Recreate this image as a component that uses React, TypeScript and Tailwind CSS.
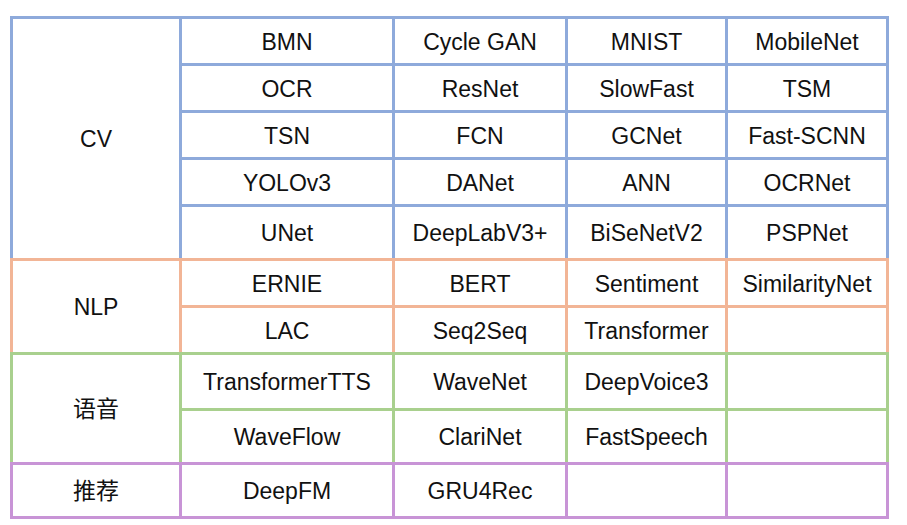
import React from 'react';

type Group = {
  name: string;
  border: string;
  rows: string[][];
  heights: string;
  span: string;
};

const groups: Group[] = [
  {
    name: 'CV',
    border: 'bg-[#8eaadb]',
    heights: 'grid-rows-[44px_44px_44px_44px_51px]',
    span: 'row-span-5',
    rows: [
      ['BMN', 'Cycle GAN', 'MNIST', 'MobileNet'],
      ['OCR', 'ResNet', 'SlowFast', 'TSM'],
      ['TSN', 'FCN', 'GCNet', 'Fast-SCNN'],
      ['YOLOv3', 'DANet', 'ANN', 'OCRNet'],
      ['UNet', 'DeepLabV3+', 'BiSeNetV2', 'PSPNet'],
    ],
  },
  {
    name: 'NLP',
    border: 'bg-[#f2b596]',
    heights: 'grid-rows-[44px_44px]',
    span: 'row-span-2',
    rows: [
      ['ERNIE', 'BERT', 'Sentiment', 'SimilarityNet'],
      ['LAC', 'Seq2Seq', 'Transformer', ''],
    ],
  },
  {
    name: '语音',
    border: 'bg-[#a9d08e]',
    heights: 'grid-rows-[53px_51px]',
    span: 'row-span-2',
    rows: [
      ['TransformerTTS', 'WaveNet', 'DeepVoice3', ''],
      ['WaveFlow', 'ClariNet', 'FastSpeech', ''],
    ],
  },
  {
    name: '推荐',
    border: 'bg-[#c894d6]',
    heights: 'grid-rows-[51px]',
    span: 'row-span-1',
    rows: [['DeepFM', 'GRU4Rec', '', '']],
  },
];

const App = () => {
  return (
    <div
      className="w-[907px] h-[525px] bg-white pl-[10px] pt-[16px] text-[23px] text-[#111111]"
      style={{ fontFamily: '"Liberation Sans", Arial, "Noto Sans CJK SC", sans-serif' }}
    >
      <div className="flex flex-col w-[879px]">
        {groups.map((group, gi) => (
          <div
            key={group.name}
            className={`grid grid-cols-[166px_210px_170px_157px_158px] gap-[3px] p-[3px] ${group.heights} ${group.border} ${
              gi > 0 ? '-mt-[3px]' : ''
            }`}
          >
            <div className={`${group.span} bg-white flex items-center justify-center pt-[2px]`}>
              {group.name}
            </div>
            {group.rows.flat().map((cell, ci) => (
              <div key={ci} className="bg-white flex items-center justify-center whitespace-nowrap pt-[2px]">
                {cell}
              </div>
            ))}
          </div>
        ))}
      </div>
    </div>
  );
};

export default App;
